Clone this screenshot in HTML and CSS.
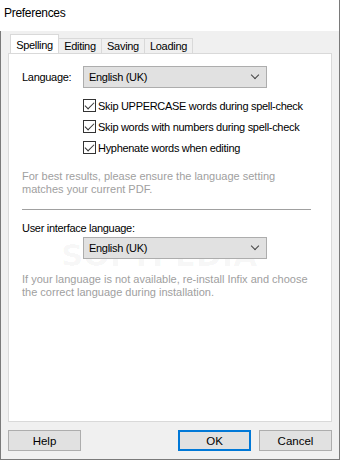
FILE: index.html
```html
<!DOCTYPE html>
<html lang="en">
<head>
    <meta charset="UTF-8">
    <title>Preferences</title>
    <link rel="stylesheet" href="styles.css">
</head>
<body>
    <div class="window">
        <div class="titlebar">Preferences</div>
        <div class="body">
            <div class="tabs">
                <div class="tab active">Spelling</div>
                <div class="tab">Editing</div>
                <div class="tab">Saving</div>
                <div class="tab wide">Loading</div>
            </div>
            <div class="panel">
                <div class="row">
                    <label class="label">Language:</label>
                    <div class="select">English (UK)<span class="chevron"></span></div>
                </div>
                <div class="checks">
                    <div class="check"><span class="box"></span>Skip UPPERCASE words during spell-check</div>
                    <div class="check"><span class="box"></span>Skip words with numbers during spell-check</div>
                    <div class="check"><span class="box"></span>Hyphenate words when editing</div>
                </div>
                <p class="hint">For best results, please ensure the language setting<br>matches your current PDF.</p>
                <div class="separator"></div>
                <div class="label-top">User interface language:</div>
                <div class="select indent">English (UK)<span class="chevron"></span></div>
                <p class="hint second">If your language is not available, re-install Infix and choose<br>the correct language during installation.</p>
                <div class="watermark">SOFTPEDIA<sup>®</sup></div>
            </div>
            <div class="footer">
                <button class="btn">Help</button>
                <div class="right">
                    <button class="btn default">OK</button>
                    <button class="btn">Cancel</button>
                </div>
            </div>
        </div>
    </div>
</body>
</html>
```

FILE: styles.css
```css
html, body {
    margin: 0;
    padding: 0;
}
body {
    width: 340px;
    height: 460px;
    font-family: "Liberation Sans", Arial, sans-serif;
    font-size: 11px;
    letter-spacing: -0.3px;
    color: #000;
    background: #fff;
}
.window {
    width: 340px;
    height: 460px;
    box-sizing: border-box;
    border-right: 1px solid #7a7a7a;
    border-bottom: 1px solid #7a7a7a;
    display: flex;
    flex-direction: column;
}
.titlebar {
    height: 31px;
    line-height: 27px;
    padding-left: 4px;
    font-size: 12px;
    letter-spacing: -0.3px;
    background: #fff;
    box-sizing: border-box;
}
.body {
    flex: 1;
    background: #f0f0f0;
    border-left: 1px solid #7a7a7a;
    padding: 3px 7px 0 7px;
    display: flex;
    flex-direction: column;
}
.tabs {
    display: flex;
    align-items: flex-end;
    padding-left: 2px;
    height: 19px;
    position: relative;
    z-index: 1;
}
.tab {
    width: 44px;
    box-sizing: border-box;
    text-align: center;
    height: 15px;
    line-height: 15px;
    border: 1px solid #d9d9d9;
    border-bottom: none;
    margin-left: -1px;
    background: #f0f0f0;
}
.tab.wide {
    width: 49px;
}
.tab.active {
    width: 49px;
    height: 19px;
    line-height: 20px;
    background: #fff;
    margin-left: 0;
    position: relative;
    z-index: 2;
}
.panel {
    height: 369px;
    background: #fff;
    border: 1px solid #d9d9d9;
    padding: 12px 21px 0 13px;
    box-sizing: border-box;
    position: relative;
    overflow: hidden;
}
.row {
    display: flex;
    align-items: center;
}
.label {
    width: 61px;
}
.select {
    width: 184px;
    height: 22px;
    box-sizing: border-box;
    border: 1px solid #adadad;
    background: #e1e1e1;
    padding-left: 5px;
    line-height: 20px;
    position: relative;
    z-index: 1;
}
.select.indent {
    margin-left: 61px;
}
.chevron {
    position: absolute;
    right: 8px;
    top: 5px;
    width: 5px;
    height: 5px;
    border-right: 1px solid #444;
    border-bottom: 1px solid #444;
    transform: rotate(45deg);
}
.checks {
    margin: 11px 0 0 61px;
    display: flex;
    flex-direction: column;
    gap: 8px;
}
.check {
    display: flex;
    align-items: center;
    height: 13px;
    white-space: nowrap;
}
.box {
    width: 13px;
    height: 13px;
    box-sizing: border-box;
    border: 1px solid #333;
    margin-right: 2px;
    position: relative;
    flex-shrink: 0;
}
.box::after {
    content: "";
    position: absolute;
    left: 3px;
    top: 0px;
    width: 4px;
    height: 8px;
    border-right: 1px solid #333;
    border-bottom: 1px solid #333;
    transform: rotate(45deg);
}
.hint {
    color: #a0a0a0;
    margin: 16px 0 0 0;
    line-height: 13px;
    letter-spacing: 0;
    white-space: nowrap;
}
.hint.second {
    margin-top: 14px;
}
.separator {
    height: 1px;
    background: #a0a0a0;
    margin: 13px -1px 0 0;
}
.label-top {
    margin-top: 12px;
    margin-bottom: 3px;
}
.watermark {
    position: absolute;
    left: 52px;
    top: 185px;
    font-family: "DejaVu Sans", sans-serif;
    font-weight: bold;
    font-size: 31px;
    line-height: 26px;
    letter-spacing: 0;
    color: rgba(0, 0, 0, 0.035);
    pointer-events: none;
    white-space: nowrap;
}
.watermark sup {
    font-size: 10px;
    font-weight: normal;
}
.footer {
    display: flex;
    justify-content: space-between;
    margin-top: 8px;
}
.right {
    display: flex;
    gap: 8px;
}
.btn {
    width: 73px;
    height: 21px;
    box-sizing: border-box;
    border: 1px solid #adadad;
    background: #e1e1e1;
    font-family: inherit;
    font-size: 11.5px;
    color: #000;
    padding: 0;
    margin: 0;
}
.btn.default {
    border: 2px solid #0078d7;
}
```
